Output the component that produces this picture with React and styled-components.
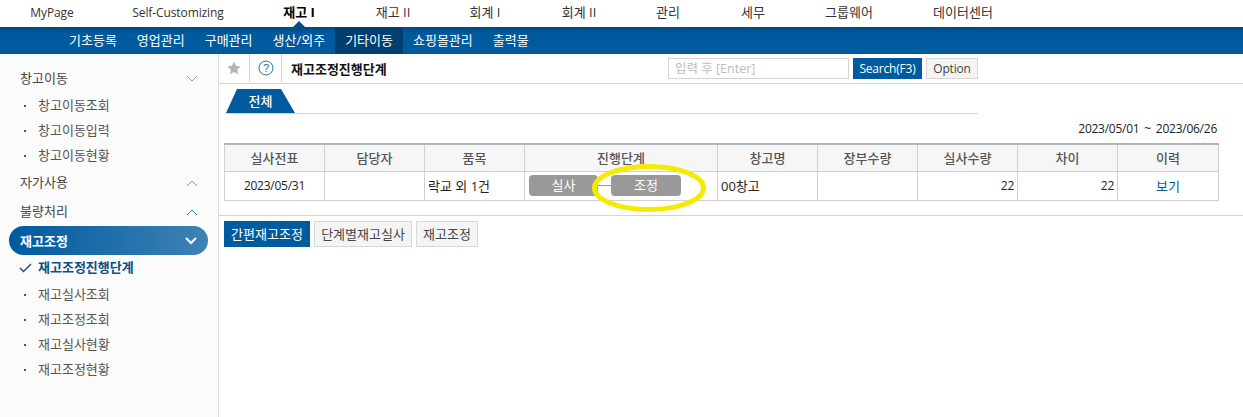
import React from 'react';
import styled, { createGlobalStyle } from 'styled-components';

const BLUE = '#005a9e';
const FONT = '"Open Sans", "Noto Sans CJK KR", sans-serif';

const GlobalStyle = createGlobalStyle`
  html, body { margin: 0; padding: 0; background: #fff; }
  body { font-family: ${FONT}; font-size: 13px; color: #222; }
  * { box-sizing: border-box; }
`;

const Page = styled.div`
  width: 1243px;
  height: 417px;
  display: flex;
  flex-direction: column;
  overflow: hidden;
`;

const TopNav = styled.nav`
  height: 27px;
  padding-left: 8px;
  display: flex;
  align-items: center;
  background: #fff;
`;

const TopItem = styled.a`
  position: relative;
  width: ${(p) => p.$w}px;
  height: 27px;
  line-height: 25px;
  text-align: center;
  font-size: ${(p) => (p.$latin ? 12 : 13)}px;
  letter-spacing: ${(p) => (p.$latin ? '-0.1px' : 0)};
  color: ${(p) => (p.$active ? '#000' : '#333')};
  font-weight: ${(p) => (p.$active ? 700 : 400)};

  ${(p) => p.$active && `
    &::after {
      content: '';
      position: absolute;
      left: 50%;
      bottom: 0;
      margin-left: -6px;
      border-left: 6px solid transparent;
      border-right: 6px solid transparent;
      border-bottom: 6px solid #0a4a80;
    }
  `}
`;

const SubNav = styled.nav`
  height: 27px;
  padding-left: 59px;
  display: flex;
  background: linear-gradient(#004a80 0, ${BLUE} 7px);
`;

const SubItem = styled.a`
  padding: 0 10px;
  line-height: 27px;
  color: #fff;
  background: ${(p) => (p.$active ? '#003f70' : 'transparent')};
`;

const Body = styled.div`
  flex: 1;
  display: flex;
  min-height: 0;
`;

const Sidebar = styled.aside`
  width: 219px;
  flex: none;
  padding-top: 10px;
  background: #fbfbfb;
  border-right: 1px solid #ddd;
`;

const Group = styled.div`
  height: 29px;
  margin: 0 20px;
  padding-bottom: 2px;
  display: flex;
  align-items: center;
  justify-content: space-between;
  color: #444;

  svg { margin-top: 2px; }
`;

const ActiveGroup = styled.div`
  height: 29px;
  margin: 0 10px 0 9px;
  padding: 0 11px;
  border-radius: 15px;
  display: flex;
  align-items: center;
  justify-content: space-between;
  color: #fff;
  font-weight: 700;
  background: linear-gradient(90deg, ${BLUE} 0, #3e82b6 100%);
`;

const SubList = styled.ul`
  list-style: none;
  margin: 0;
  padding: 0;
`;

const SubRow = styled.li`
  height: ${(p) => (p.$current ? 27 : 25)}px;
  padding-left: 38px;
  position: relative;
  line-height: 25px;
  color: ${(p) => (p.$current ? '#0a4f86' : '#555')};
  font-weight: ${(p) => (p.$current ? 700 : 400)};

  &::before {
    content: '';
    display: ${(p) => (p.$current ? 'none' : 'block')};
    position: absolute;
    left: 24px;
    top: 12px;
    width: 2px;
    height: 2px;
    background: #555;
  }
`;

const CheckMark = styled.svg`
  position: absolute;
  left: 19px;
  top: 8px;
`;

const Main = styled.main`
  flex: 1;
  min-width: 0;
`;

const Toolbar = styled.div`
  height: 30px;
  display: flex;
  align-items: center;
  border-bottom: 1px solid #d4d4d4;
`;

const IconCell = styled.div`
  width: ${(p) => p.$w}px;
  height: 28px;
  margin-top: -1px;
  display: flex;
  align-items: center;
  justify-content: center;
  border-right: 1px solid #d4d4d4;
`;

const PageTitle = styled.h1`
  width: 386px;
  margin: 0;
  padding-left: 9px;
  font-size: 13px;
  font-weight: 700;
  color: #111;
`;

const SearchInput = styled.input`
  width: 181px;
  height: 21px;
  padding: 0 6px;
  border: 1px solid #d4d4d4;
  font-family: ${FONT};
  font-size: 12.5px;
  outline: none;

  &::placeholder { color: #bbb; }
`;

const ToolButton = styled.button`
  height: 21px;
  margin-left: 4px;
  padding: 0;
  width: ${(p) => p.$w}px;
  font-family: ${FONT};
  font-size: 12px;
  letter-spacing: -0.2px;
  border: 1px solid ${(p) => (p.$primary ? BLUE : '#d8d8d8')};
  background: ${(p) => (p.$primary ? BLUE : '#f4f4f4')};
  color: ${(p) => (p.$primary ? '#fff' : '#444')};
`;

const Tabs = styled.div`
  width: 752px;
  height: 30px;
  margin-left: 7px;
  padding-top: 5px;
  border-bottom: 1px solid #d4d4d4;
`;

const Tab = styled.div`
  width: 69px;
  height: 24px;
  line-height: 25px;
  text-align: center;
  color: #fff;
  font-weight: 500;
  background: ${BLUE};
  clip-path: polygon(0 100%, 11px 0, 55px 0, 100% 100%);
`;

const DateRange = styled.div`
  width: 998px;
  height: 29px;
  line-height: 29px;
  text-align: right;
  font-size: 12px;
  letter-spacing: -0.25px;
  word-spacing: 2px;
  color: #222;
`;

const Table = styled.table`
  width: 994px;
  margin-left: 5px;
  table-layout: fixed;
  border-collapse: collapse;
  border-top: 2px solid #b0b5ba;
`;

const Col = styled.col`
  width: ${(p) => p.$w}px;
`;

const Th = styled.th`
  height: 27px;
  padding: 0;
  font-weight: 500;
  font-size: 13px;
  color: #555;
  background: #f6f6f6;
  border: 1px solid #d0d0d0;
  border-top: 0;
`;

const Td = styled.td`
  height: 29px;
  padding: 0 3px;
  font-size: ${(p) => (p.$num ? 12 : 13)}px;
  letter-spacing: ${(p) => (p.$num ? '-0.25px' : 0)};
  color: #222;
  text-align: ${(p) => p.$align || 'left'};
  border: 1px solid #d0d0d0;
`;

const ViewLink = styled.a`
  color: ${BLUE};
`;

const Stages = styled.div`
  position: relative;
  display: flex;
  align-items: center;
  padding-left: 1px;
`;

const Stage = styled.div`
  width: ${(p) => p.$w}px;
  height: 21px;
  line-height: 21px;
  border-radius: 4px;
  text-align: center;
  color: #fff;
  background: #999;
`;

const Connector = styled.div`
  width: 13px;
  height: 1px;
  background: #999;
`;

const Highlight = styled.svg`
  position: absolute;
  left: 63px;
  top: -11px;
  pointer-events: none;
`;

const Divider = styled.div`
  height: 1px;
  margin-top: 14px;
  background: #d4d4d4;
`;

const Actions = styled.div`
  display: flex;
  gap: 4px;
  margin: 5px 0 0 5px;
`;

const ActionButton = styled.button`
  height: 26px;
  padding: 0;
  width: ${(p) => p.$w}px;
  font-family: ${FONT};
  font-size: 13px;
  border: 1px solid ${(p) => (p.$primary ? BLUE : '#d8d8d8')};
  background: ${(p) => (p.$primary ? BLUE : '#f4f4f4')};
  color: ${(p) => (p.$primary ? '#fff' : '#444')};
`;

const Chevron = ({ up, color = '#8a9aa8', width = 1 }) => (
  <svg width="12" height="8" viewBox="0 0 12 8">
    <polyline
      points={up ? '1,7 6,2 11,7' : '1,1 6,6 11,1'}
      fill="none"
      stroke={color}
      strokeWidth={width}
    />
  </svg>
);

const topItems = [
  ['MyPage', 88, false, true], ['Self-Customizing', 164, false, true], ['재고 I', 78, true], ['재고 II', 110],
  ['회계 I', 74], ['회계 II', 114], ['관리', 64], ['세무', 106], ['그룹웨어', 86], ['데이터센터', 142],
];
const subItems = ['기초등록', '영업관리', '구매관리', '생산/외주', '기타이동', '쇼핑몰관리', '출력물'];
const columns = [
  ['실사전표', 100], ['담당자', 100], ['품목', 100], ['진행단계', 193], ['창고명', 100],
  ['장부수량', 100], ['실사수량', 100], ['차이', 100], ['이력', 101],
];

export default function App() {
  return (
    <Page>
      <GlobalStyle />
      <TopNav>
        {topItems.map(([label, w, active, latin]) => (
          <TopItem key={label} $w={w} $active={active} $latin={latin}>{label}</TopItem>
        ))}
      </TopNav>
      <SubNav>
        {subItems.map((label) => (
          <SubItem key={label} $active={label === '기타이동'}>{label}</SubItem>
        ))}
      </SubNav>
      <Body>
        <Sidebar>
          <Group>창고이동<Chevron /></Group>
          <SubList>
            <SubRow>창고이동조회</SubRow>
            <SubRow>창고이동입력</SubRow>
            <SubRow>창고이동현황</SubRow>
          </SubList>
          <Group>자가사용<Chevron up /></Group>
          <Group>불량처리<Chevron up color="#3e82b6" /></Group>
          <ActiveGroup>재고조정<Chevron color="#fff" width={2} /></ActiveGroup>
          <SubList>
            <SubRow $current>
              <CheckMark width="13" height="10" viewBox="0 0 13 10">
                <polyline points="1,5 4.5,8.5 12,1" fill="none" stroke="#24507a" strokeWidth="1.5" />
              </CheckMark>
              재고조정진행단계
            </SubRow>
            <SubRow>재고실사조회</SubRow>
            <SubRow>재고조정조회</SubRow>
            <SubRow>재고실사현황</SubRow>
            <SubRow>재고조정현황</SubRow>
          </SubList>
        </Sidebar>
        <Main>
          <Toolbar>
            <IconCell $w={31}>
              <svg width="14" height="14" viewBox="0 0 24 24">
                <path d="M12 1l3.4 7.3 7.9 1-5.8 5.5 1.5 7.9L12 18.8l-7 3.9 1.5-7.9L.7 9.3l7.9-1z" fill="#b5b5b5" />
              </svg>
            </IconCell>
            <IconCell $w={32}>
              <svg width="16" height="16" viewBox="0 0 16 16">
                <circle cx="8" cy="8" r="7" fill="none" stroke="#2a6ea6" strokeWidth="1" />
                <text x="8" y="12" textAnchor="middle" fontSize="11" fill="#2a6ea6" fontFamily="Liberation Sans">?</text>
              </svg>
            </IconCell>
            <PageTitle>재고조정진행단계</PageTitle>
            <SearchInput placeholder="입력 후 [Enter]" />
            <ToolButton $primary $w={69}>Search(F3)</ToolButton>
            <ToolButton $w={52}>Option</ToolButton>
          </Toolbar>
          <Tabs><Tab>전체</Tab></Tabs>
          <DateRange>2023/05/01 ~ 2023/06/26</DateRange>
          <Table>
            <colgroup>
              {columns.map(([label, w]) => <Col key={label} $w={w} />)}
            </colgroup>
            <thead>
              <tr>{columns.map(([label]) => <Th key={label}>{label}</Th>)}</tr>
            </thead>
            <tbody>
              <tr>
                <Td $align="center" $num>2023/05/31</Td>
                <Td />
                <Td>락교 외 1건</Td>
                <Td>
                  <Stages>
                    <Stage $w={69}>실사</Stage>
                    <Connector />
                    <Stage $w={70}>조정</Stage>
                    <Highlight width="116" height="48" viewBox="0 0 116 48">
                      <ellipse cx="58" cy="24" rx="54.5" ry="21.5" fill="none" stroke="#f6ea00" strokeWidth="5" />
                    </Highlight>
                  </Stages>
                </Td>
                <Td>00창고</Td>
                <Td />
                <Td $align="right" $num>22</Td>
                <Td $align="right" $num>22</Td>
                <Td $align="center"><ViewLink>보기</ViewLink></Td>
              </tr>
            </tbody>
          </Table>
          <Divider />
          <Actions>
            <ActionButton $primary $w={86}>간편재고조정</ActionButton>
            <ActionButton $w={98}>단계별재고실사</ActionButton>
            <ActionButton $w={62}>재고조정</ActionButton>
          </Actions>
        </Main>
      </Body>
    </Page>
  );
}
